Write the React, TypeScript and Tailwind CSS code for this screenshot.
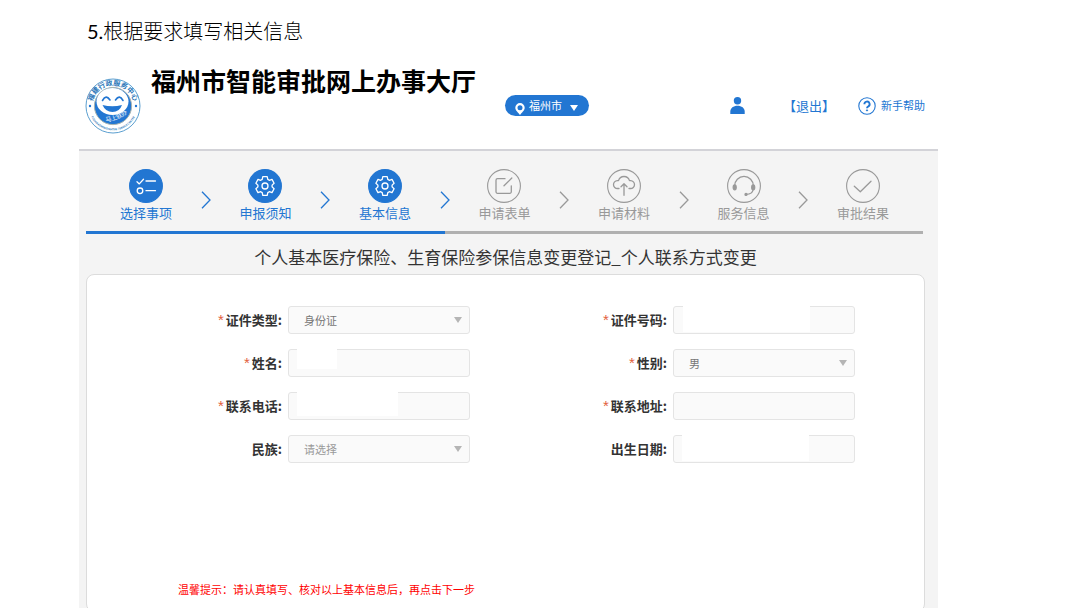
import type { ReactNode } from "react";

type Step = { label: string; done: boolean; icon: ReactNode };

type FieldProps = {
  id: string;
  label: string;
  required?: boolean;
  options?: string[];
  muted?: boolean;
  mask?: string;
};

const steps: Step[] = [
  {
    label: "选择事项",
    done: true,
    icon: (
      <>
        <path d="M8 12.8l2.3 2.1 4.2-4.6" />
        <path d="M17 12h9.5M17 21.7h9.5" />
        <circle cx="11" cy="21.8" r="2.8" />
      </>
    ),
  },
  { label: "申报须知", done: true, icon: <GearIcon /> },
  { label: "基本信息", done: true, icon: <GearIcon /> },
  {
    label: "申请表单",
    done: false,
    icon: (
      <>
        <path d="M18 9.7h-7.5A1.5 1.5 0 0 0 9 11.2v11.6a1.5 1.5 0 0 0 1.5 1.5h12.3a1.5 1.5 0 0 0 1.5-1.5v-6" />
        <path d="M17 16.8L24.8 9" />
      </>
    ),
  },
  {
    label: "申请材料",
    done: false,
    icon: (
      <>
        <path d="M12 19.5h-1.5a3.9 3.9 0 0 1-.2-7.8h1.2a5.7 5.7 0 0 1 11 0h1.2a3.9 3.9 0 0 1-.2 7.8H22" />
        <path d="M17 26.3V15M14 17.8l3-3 3 3" />
      </>
    ),
  },
  {
    label: "服务信息",
    done: false,
    icon: (
      <>
        <path d="M7.6 17a9.4 9.6 0 0 1 18.8 0" />
        <path d="M26.2 20.5q-.8 4.8-7 4.9" />
        <ellipse cx="7.7" cy="18.4" rx="1.5" ry="2.4" fill="currentColor" />
        <ellipse cx="26.2" cy="18.4" rx="1.5" ry="2.4" fill="currentColor" />
        <circle cx="19" cy="25.4" r="1" fill="currentColor" />
      </>
    ),
  },
  { label: "审批结果", done: false, icon: <path d="M8.3 17.3l6 5.4L25 12.3" /> },
];

const fields: FieldProps[] = [
  { id: "idType", label: "证件类型", required: true, options: ["身份证"] },
  { id: "idNumber", label: "证件号码", required: true, mask: "left-[10px] -top-0.5 w-[127px] h-[28px]" },
  { id: "name", label: "姓名", required: true, mask: "left-[9px] -top-0.5 w-[40px] h-[22px]" },
  { id: "gender", label: "性别", required: true, options: ["男"] },
  { id: "phone", label: "联系电话", required: true, mask: "left-[9px] -top-0.5 w-[101px] h-[26px]" },
  { id: "address", label: "联系地址", required: true },
  { id: "nation", label: "民族", options: ["请选择"], muted: true },
  { id: "birthday", label: "出生日期", mask: "left-[9px] -top-0.5 w-[127px] h-[28px]" },
];

function GearIcon() {
  return (
    <>
      <path d="M14.2 10.4L14.8 7.7H19.2L19.8 10.4L21.3 11.3L24 10.4L26.1 14.2L24.1 16.1V17.9L26.1 19.8L24 23.6L21.3 22.7L19.8 23.6L19.2 26.3H14.8L14.2 23.6L12.7 22.7L10 23.6L7.9 19.8L9.9 17.9V16.1L7.9 14.2L10 10.4L12.7 11.3Z" />
      <circle cx="17" cy="17" r="3" />
    </>
  );
}

function Logo() {
  return (
    <svg viewBox="0 0 56 56" className="h-14 w-14 shrink-0" role="img" aria-label="福建行政服务中心">
      <defs>
        <path id="ring-top" d="M8.6 37.2a21.2 21.2 0 1 1 38.8 0" />
        <path id="ring-bottom" d="M3.6 28a24.4 24.4 0 0 0 48.8 0" />
        <path id="motto" d="M15 43.500q17 2 30-11" />
      </defs>
      <circle cx="28" cy="28" r="27" fill="#fff" stroke="#5b9fd0" />
      <circle cx="28" cy="28" r="18.6" fill="#2276d2" stroke="#a9b4b0" />
      <ellipse cx="27.5" cy="23.5" rx="16" ry="13.5" fill="#fff" />
      <path d="M17.500 22.500q3.500-6.500 7.500-.5M30.500 22q4-6 7.500.5" fill="none" stroke="#2276d2" strokeWidth="1.6" strokeLinecap="round" />
      <path d="M17.500 27q10 2.500 19.500 0-2.500 7-9.500 7t-10-7z" fill="#2276d2" />
      <g fill="#2a76b8" textAnchor="middle" className="font-bold">
        <text fontSize="7">
          <textPath href="#ring-top" startOffset="50%">福建行政服务中心</textPath>
        </text>
        <text fontSize="2.6">
          <textPath href="#ring-bottom" startOffset="50%">FUJIAN ADMINISTRATIVE SERVICE CENTER</textPath>
        </text>
      </g>
      <text fontSize="6" fill="#fff" textAnchor="middle">
        <textPath href="#motto" startOffset="54%">马上就办</textPath>
      </text>
      <circle cx="5" cy="28" r="1.2" fill="#2276d2" />
      <circle cx="51" cy="28" r="1.2" fill="#2276d2" />
    </svg>
  );
}

function Field({ id, label, required, options, muted, mask }: FieldProps) {
  return (
    <div className="flex items-center">
      <label htmlFor={id} className="flex w-[97px] shrink-0 items-center justify-end text-[13px] leading-5 font-bold text-[#333]">
        {required && <span className="mr-0.5 font-['Liberation_Sans',sans-serif] text-[15px] font-normal text-[#e2603c]">*</span>}
        {label}:
      </label>
      <div className="relative ml-1.5 flex-1">
        {options ? (
          <>
            <select
              id={id}
              className={`block h-7 w-full appearance-none rounded-[3px] border border-[#e4e4e4] bg-[#fafafa] px-[15px] text-[11px] ${muted ? "text-[#999]" : "text-[#777]"}`}
            >
              {options.map((o) => (
                <option key={o}>{o}</option>
              ))}
            </select>
            <svg viewBox="0 0 8 6" className="pointer-events-none absolute top-[11px] right-[8px] h-1.5 w-2 fill-[#b5b5b5]">
              <path d="M0 0h8L4 6z" />
            </svg>
          </>
        ) : (
          <input id={id} className="block h-7 w-full rounded-[3px] border border-[#e4e4e4] bg-[#fafafa] px-[15px] text-[11px] text-[#777]" />
        )}
        {mask && <span className={`absolute bg-white ${mask}`} />}
      </div>
    </div>
  );
}

export default function App() {
  return (
    <div className="flex h-screen flex-col overflow-hidden bg-white pr-[142px] pl-[79px] font-['Noto_Sans_CJK_SC',sans-serif]">
      <p className="shrink-0 pt-4 pl-2 text-[20px] leading-[30px] font-light text-black">
        <span className="font-['Lato',sans-serif] font-normal">5.</span>根据要求填写相关信息
      </p>

      {/* Header */}
      <header className="mt-4 flex h-[87px] shrink-0 items-center pr-[13px] pl-1.5 text-[#2276d2]">
        <Logo />
        <h1 className="ml-[10px] self-start text-[25px] leading-9 font-bold whitespace-nowrap text-black">
          福州市智能审批网上办事大厅
        </h1>
        <button className="ml-[29px] flex h-[21px] w-[84px] shrink-0 items-center rounded-full bg-[#2276d2] pl-[10px] text-[11px] text-white">
          <svg viewBox="0 0 10 12" className="mt-1.5 h-3 w-[10px] fill-white">
            <path fillRule="evenodd" d="M5 0a4.7 4.7 0 0 1 4.7 4.7C9.7 7.5 6.5 9.5 5 12 3.5 9.5.3 7.5.3 4.7A4.7 4.7 0 0 1 5 0zm0 2.2a2.5 2.5 0 1 0 0 5 2.5 2.5 0 0 0 0-5z" />
          </svg>
          <span className="ml-1">福州市</span>
          <svg viewBox="0 0 8 6" className="mt-1 ml-2 h-1.5 w-2 fill-white">
            <path d="M0 0h8L4 6z" />
          </svg>
        </button>
        <nav className="ml-auto flex items-center">
          <a href="#user" aria-label="用户">
            <svg viewBox="0 0 15 17" className="h-[17px] w-[15px] fill-current">
              <circle cx="7.5" cy="3.8" r="3.7" />
              <path d="M.3 17v-2.500C.3 11 3.500 8.700 7.500 8.700s7.200 2.300 7.200 5.800V17z" />
            </svg>
          </a>
          <a href="#logout" className="ml-[38px] text-[13px]">【退出】</a>
          <a href="#help" className="ml-[23px] flex items-center text-[11px]">
            <svg viewBox="0 0 18 18" className="mr-[5px] h-[18px] w-[18px]" fill="none" stroke="currentColor">
              <circle cx="9" cy="9" r="8.2" strokeWidth="1.1" />
              <path d="M6.400 7.200a2.600 2.600 0 1 1 3.900 2.200Q9 10.100 9 11.300" strokeWidth="1.9" />
              <circle cx="9" cy="13.4" r=".6" fill="currentColor" />
            </svg>
            新手帮助
          </a>
        </nav>
      </header>

      <main className="flex-1 border-t-2 border-[#d3d3d8] bg-[#f4f4f4] pr-[13px] pl-[7px]">
        {/* Steps */}
        <ol className="mr-0.5 flex items-start px-[30px] pt-[18px]">
          {steps.map((step, i) => (
            <li key={step.label} className="contents">
              {i > 0 && (
                <span className={`mt-[22px] flex flex-1 justify-center ${steps[i - 1].done ? "text-[#2276d2]" : "text-[#999]"}`}>
                  <svg viewBox="0 0 10 18" className="h-[18px] w-[10px]" fill="none" stroke="currentColor" strokeWidth="1.3">
                    <path d="M1 .7L9 9l-8 8.3" />
                  </svg>
                </span>
              )}
              <div className={`flex flex-1 flex-col items-center ${step.done ? "text-[#2276d2]" : "text-[#999]"}`}>
                <svg viewBox="0 0 34 34" className="h-[34px] w-[34px]">
                  <circle
                    cx="17"
                    cy="17"
                    r="16.4"
                    className={step.done ? "fill-current" : "fill-none"}
                    stroke="currentColor"
                    strokeWidth="1.1"
                  />
                  <g
                    className={step.done ? "text-white" : ""}
                    fill="none"
                    stroke="currentColor"
                    strokeWidth="1.3"
                    strokeLinecap="round"
                    strokeLinejoin="round"
                  >
                    {step.icon}
                  </g>
                </svg>
                <span className="text-[13px] leading-5 whitespace-nowrap">{step.label}</span>
              </div>
            </li>
          ))}
        </ol>
        <div className="mt-2 mr-0.5 h-[3px] bg-[#b0b0b0]">
          <div className="h-full w-3/7 bg-[#2276d2]" />
        </div>

        <h2 className="pt-1.5 text-center text-[17px] leading-[34px] text-[#333]">
          个人基本医疗保险、生育保险参保信息变更登记_个人联系方式变更
        </h2>

        {/* Form */}
        <form className="rounded-lg border border-[#dcdcdc] bg-white pt-[31px] pb-3">
          <div className="grid grid-cols-2 gap-x-[100px] gap-y-[15px] pr-[69px] pl-[98px]">
            {fields.map((f) => (
              <Field key={f.id} {...f} />
            ))}
          </div>
          <p className="mt-[116px] pl-[91px] text-[11px] leading-5 text-[#ff0000]">
            温馨提示：请认真填写、核对以上基本信息后，再点击下一步
          </p>
        </form>
      </main>
    </div>
  );
}
